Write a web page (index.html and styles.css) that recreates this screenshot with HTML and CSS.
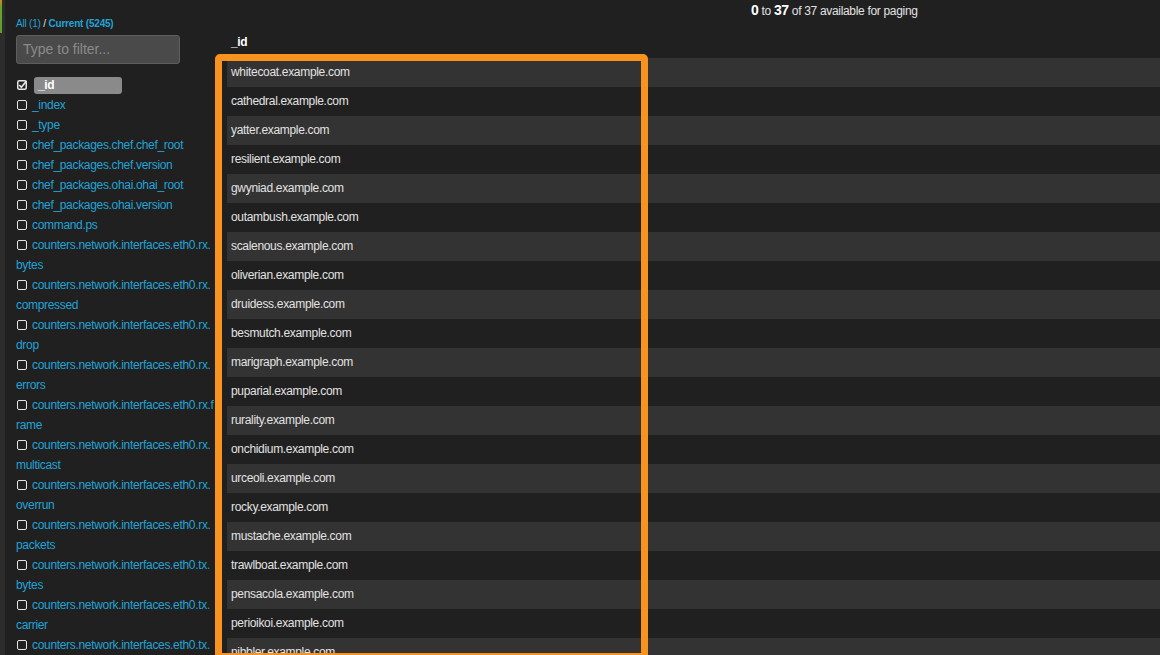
FILE: index.html
```html
<!DOCTYPE html>
<html>
<head>
<meta charset="utf-8">
<link rel="stylesheet" href="styles.css">
</head>
<body>
<div class="rail"><div class="rail-mark"></div></div>
<aside class="sidebar">
  <div class="scope"><span class="link">All (1)</span> <span class="sep">/</span> <span class="link strong">Current (5245)</span></div>
  <div class="filter">Type to filter...</div>
  <ul class="fields">
    <li><span class="cb checked"><svg viewBox="0 0 10 10" width="10" height="10"><rect x="0.75" y="0.75" width="8.5" height="8.5" rx="1.5" fill="#222" stroke="#e8e8e8" stroke-width="1.5"/><path d="M2.3 5 L4.3 7.2 L9.5 1" fill="none" stroke="#e8e8e8" stroke-width="1.6"/></svg></span><span class="sel">_id</span></li>
    <li><span class="cb"></span>_index</li>
    <li><span class="cb"></span>_type</li>
    <li><span class="cb"></span>chef_packages.chef.chef_root</li>
    <li><span class="cb"></span>chef_packages.chef.version</li>
    <li><span class="cb"></span>chef_packages.ohai.ohai_root</li>
    <li><span class="cb"></span>chef_packages.ohai.version</li>
    <li><span class="cb"></span>command.ps</li>
    <li><span class="cb"></span>counters.network.interfaces.eth0.rx.bytes</li>
    <li><span class="cb"></span>counters.network.interfaces.eth0.rx.compressed</li>
    <li><span class="cb"></span>counters.network.interfaces.eth0.rx.drop</li>
    <li><span class="cb"></span>counters.network.interfaces.eth0.rx.errors</li>
    <li><span class="cb"></span>counters.network.interfaces.eth0.rx.frame</li>
    <li><span class="cb"></span>counters.network.interfaces.eth0.rx.multicast</li>
    <li><span class="cb"></span>counters.network.interfaces.eth0.rx.overrun</li>
    <li><span class="cb"></span>counters.network.interfaces.eth0.rx.packets</li>
    <li><span class="cb"></span>counters.network.interfaces.eth0.tx.bytes</li>
    <li><span class="cb"></span>counters.network.interfaces.eth0.tx.carrier</li>
    <li><span class="cb"></span>counters.network.interfaces.eth0.tx.colls</li>
  </ul>
</aside>
<main class="main">
  <div class="pager"><b class="big">0</b> to <b class="big">37</b> of 37 available for paging</div>
  <div class="thead">_id</div>
  <div class="rows">
    <div class="row">whitecoat.example.com</div>
    <div class="row">cathedral.example.com</div>
    <div class="row">yatter.example.com</div>
    <div class="row">resilient.example.com</div>
    <div class="row">gwyniad.example.com</div>
    <div class="row">outambush.example.com</div>
    <div class="row">scalenous.example.com</div>
    <div class="row">oliverian.example.com</div>
    <div class="row">druidess.example.com</div>
    <div class="row">besmutch.example.com</div>
    <div class="row">marigraph.example.com</div>
    <div class="row">puparial.example.com</div>
    <div class="row">rurality.example.com</div>
    <div class="row">onchidium.example.com</div>
    <div class="row">urceoli.example.com</div>
    <div class="row">rocky.example.com</div>
    <div class="row">mustache.example.com</div>
    <div class="row">trawlboat.example.com</div>
    <div class="row">pensacola.example.com</div>
    <div class="row">perioikoi.example.com</div>
    <div class="row">nibbler.example.com</div>
  </div>
  <div class="highlight"></div>
</main>
</body>
</html>
```
FILE: styles.css
```css
html, body {
  margin: 0;
  padding: 0;
  height: 655px;
  overflow: hidden;
  background: #202020;
  font-family: "Liberation Sans", Arial, sans-serif;
  font-size: 12px;
  letter-spacing: -0.32px;
}
body {
  display: flex;
  align-items: stretch;
}
.rail {
  width: 5px;
  flex: none;
  background: #2c2c2c;
}
.rail-mark {
  width: 2px;
  height: 33px;
  background: linear-gradient(#d9861c, #6aa52a 20%, #5c9e2a);
}
.sidebar {
  width: 198px;
  flex: none;
  padding-left: 11px;
  padding-top: 18px;
}
.scope {
  font-size: 10px;
  line-height: 12px;
  height: 12px;
  color: #ffffff;
  letter-spacing: -0.2px;
}
.link { color: #22a3d6; }
.strong { font-weight: bold; }
.sep { color: #e0e0e0; }
.filter {
  margin-top: 5px;
  box-sizing: border-box;
  width: 164px;
  height: 29px;
  border: 1px solid #5e5e5e;
  border-radius: 3px;
  background: #4a4a4a;
  color: #8a8a8a;
  font-size: 14px;
  line-height: 27px;
  padding-left: 6px;
  letter-spacing: 0;
}
.fields {
  list-style: none;
  margin: 11px 0 0;
  padding: 0;
}
.fields li {
  line-height: 20px;
  color: #22a3d6;
  word-break: break-all;
}
.cb {
  display: inline-block;
  width: 10px;
  height: 10px;
  box-sizing: border-box;
  border: 1.6px solid #e6e6e6;
  border-radius: 2px;
  background: #222;
  margin-left: 1px;
  margin-right: 5px;
  vertical-align: -1px;
}
.cb.checked {
  border: none;
  background: none;
  vertical-align: -1px;
}
.cb.checked svg { display: block; }
.sel {
  display: inline-block;
  width: 84px;
  height: 17px;
  line-height: 17px;
  padding-left: 4px;
  margin-left: 2px;
  border-radius: 3px;
  background: #8a8a8a;
  color: #ffffff;
  font-weight: bold;
}
.main {
  flex: 1;
  margin-left: 13px;
  position: relative;
  color: #e2e2e2;
}
.pager {
  height: 20px;
  line-height: 20px;
  padding-left: 524px;
  color: #e2e2e2;
}
.big {
  font-size: 14px;
  color: #ffffff;
}
.thead {
  height: 38px;
  box-sizing: border-box;
  padding-top: 12px;
  padding-left: 4px;
  line-height: 20px;
  font-weight: bold;
  color: #ffffff;
}
.row {
  height: 29px;
  line-height: 29px;
  padding-left: 4px;
  background: #202020;
}
.row:nth-child(odd) {
  background: #333333;
}
.highlight {
  position: absolute;
  left: -12px;
  top: 54px;
  width: 433px;
  height: 606px;
  box-sizing: border-box;
  border: 7px solid #f8931f;
  border-radius: 5px;
}
```
